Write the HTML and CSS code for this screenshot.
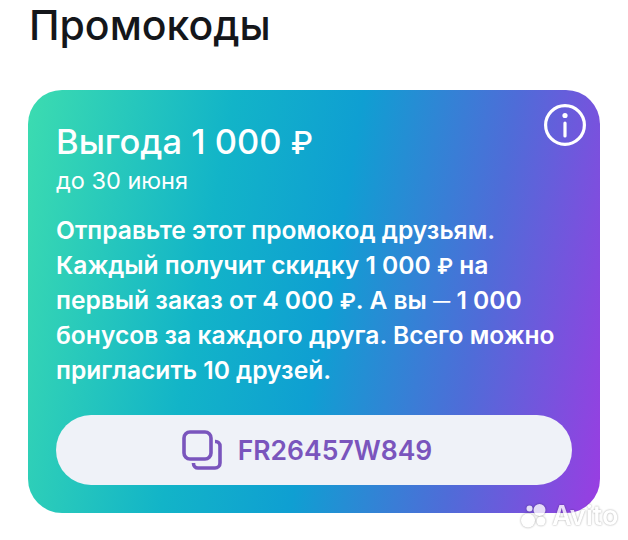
FILE: index.html
```html
<!DOCTYPE html>
<html lang="ru">
<head>
    <meta charset="UTF-8">
    <meta name="viewport" content="width=device-width, initial-scale=1.0">
    <title>Промокоды</title>
    <link rel="stylesheet" href="styles.css">
</head>
<body>
    <h1 class="title">Промокоды</h1>

    <section class="promo-card">
        <svg class="info-icon" viewBox="0 0 42 42" fill="none" stroke="white" stroke-width="3.2" stroke-linecap="round">
            <circle cx="21" cy="21" r="19.4"/>
            <path d="M21 19v13"/>
            <circle cx="21" cy="11.5" r="2.6" fill="white" stroke="none"/>
        </svg>

        <h2 class="promo-title">Выгода 1 000 <span class="rub">₽</span></h2>
        <p class="promo-date">до 30 июня</p>
        <p class="promo-text">
            Отправьте этот промокод друзьям.<br>
            Каждый получит скидку 1 000 <span class="rub">₽</span> на<br>
            первый заказ от 4 000 <span class="rub">₽</span>. А вы <span class="dash">—</span> 1 000<br>
            бонусов за каждого друга. Всего можно<br>
            пригласить 10 друзей.
        </p>

        <div class="promo-code">
            <svg class="copy-icon" viewBox="0 0 40 40" fill="none" stroke="#7a55bd" stroke-width="3.6" stroke-linejoin="round">
                <rect x="2" y="2" width="27" height="27" rx="6"/>
                <path d="M33 11.500h.5a4.500 4.500 0 0 1 4.500 4.500v17a5 5 0 0 1-5 5H16a4.500 4.500 0 0 1-4.500-4.500V33"/>
            </svg>
            <span class="code-value">FR26457W849</span>
        </div>
    </section>

    <div class="watermark">
        <svg class="watermark-dots" viewBox="0 0 26 24">
            <circle cx="7" cy="16.500" r="7"/>
            <circle cx="20" cy="17" r="4.500"/>
            <circle cx="8.500" cy="4.500" r="3"/>
            <circle cx="18.500" cy="6" r="6"/>
        </svg>
        <span class="watermark-text">Avito</span>
    </div>
</body>
</html>
```

FILE: styles.css
```css
* {
    box-sizing: border-box;
    margin: 0;
    padding: 0;
}

body {
    width: 628px;
    height: 540px;
    overflow: hidden;
    position: relative;
    background: #fff;
    font-family: Inter, "Noto Sans", sans-serif;
    padding-left: 28px;
}

.title {
    font-size: 41px;
    font-weight: 500;
    line-height: 50px;
    color: #14161a;
    margin-bottom: 40px;
    margin-left: 1px;
}

.promo-card {
    position: relative;
    width: 572px;
    height: 423px;
    padding: 32px 28px 28px;
    border-radius: 34px;
    color: #fff;
    background: linear-gradient(100deg, #3cdcb0 0%, #12b4c8 32%, #0f9fd2 52%, #4f6cd8 76%, #9a3de2 100%);
}

.info-icon {
    position: absolute;
    top: 14px;
    right: 14px;
    width: 42px;
    height: 42px;
}

.promo-title {
    font-size: 34.500px;
    font-weight: 500;
    line-height: 40px;
}

.promo-date {
    font-size: 23.500px;
    line-height: 28px;
    margin-top: 5px;
}

.promo-text {
    font-size: 24.600px;
    font-weight: 600;
    line-height: 35px;
    margin-top: 18px;
}

.rub {
    font-size: 0.9em;
    line-height: 1;
}

.dash {
    font-size: 0.7em;
    line-height: 1;
    vertical-align: 2px;
}

.promo-code {
    display: flex;
    align-items: center;
    justify-content: center;
    gap: 16px;
    height: 70px;
    margin-top: 27px;
    padding-right: 14px;
    border-radius: 35px;
    background: #eff2f8;
}

.copy-icon {
    width: 40px;
    height: 40px;
}

.code-value {
    font-size: 26.500px;
    font-weight: 600;
    color: #7a55bd;
}

.watermark {
    position: absolute;
    left: 521px;
    top: 499px;
    display: flex;
    align-items: center;
    gap: 5px;
    opacity: 0.8;
}

.watermark-dots {
    width: 26px;
    height: 24px;
    fill: #fff;
    filter: drop-shadow(0 0 1px rgba(0, 0, 0, 0.45));
}

.watermark-text {
    font-size: 27px;
    font-weight: 600;
    color: #fff;
    text-shadow: 0 0 2px rgba(0, 0, 0, 0.5);
}
```
